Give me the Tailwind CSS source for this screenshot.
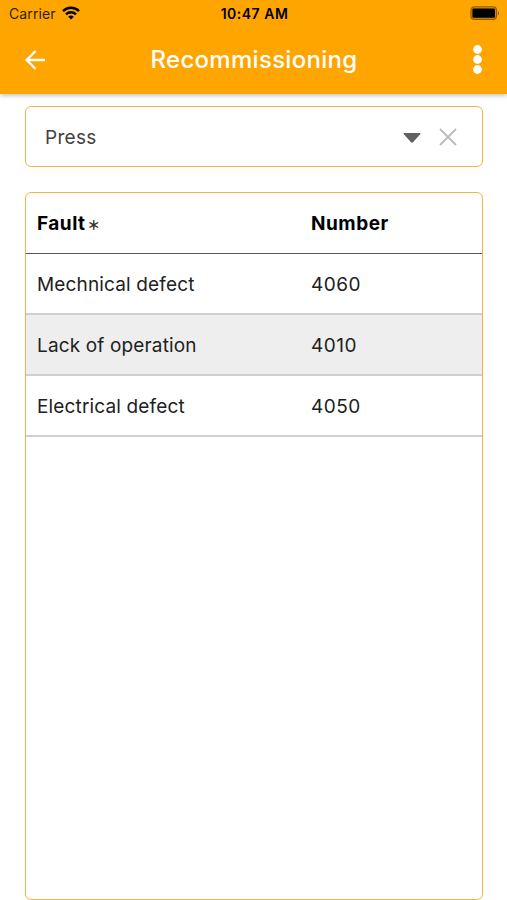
<!DOCTYPE html>
<html lang="en">
<head>
  <meta charset="UTF-8" />
  <meta name="viewport" content="width=device-width, initial-scale=1.0"/>
  <title>Recommissioning</title>
  <script src="https://cdn.jsdelivr.net/npm/@tailwindcss/browser@4"></script>
</head>

<body class="flex flex-col h-screen overflow-hidden bg-white font-['Inter',sans-serif] text-[#212121]">
  <header class="h-[94px] shrink-0 bg-[#ffa500] shadow-[0_1px_5px_rgba(0,0,0,0.3)]">
    <!-- Status bar -->
    <div class="grid grid-cols-3 items-center h-7 pl-[9px] pr-[7px] text-black">
      <div class="flex items-center gap-[6px]">
        <span class="text-[14px] leading-7 tracking-[0.1px] text-black/85">Carrier</span>
        <svg class="w-[18px] h-[14px] -mt-[2px]" viewBox="0 0 18 14" fill="none" stroke="currentColor" stroke-width="2.4">
          <path d="M1 5.1a11.3 11.3 0 0 1 16 0" />
          <path d="M4 8.3a7.1 7.1 0 0 1 10 0" />
          <path d="M9 13.6 6.2 10.8a4 4 0 0 1 5.6 0z" fill="currentColor" stroke="none" />
        </svg>
      </div>
      <span class="text-center text-[14px] font-semibold leading-7 tracking-[0.5px] whitespace-nowrap">10:47 AM</span>
      <svg class="justify-self-end w-[30px] h-[14px] -mt-[2px]" viewBox="0 0 30 14">
        <rect x="0.9" y="0.8" width="25.6" height="12.6" rx="3.4" fill="#000" fill-opacity="0.15" stroke="#000" stroke-opacity="0.4" stroke-width="1.1" />
        <rect x="2.4" y="2.4" width="22.6" height="9.4" rx="1.2" />
        <path d="M27.8 5v4.4c1.6-.7 1.6-3.7 0-4.4z" fill-opacity="0.45" />
      </svg>
    </div>
    <!-- Toolbar -->
    <div class="flex items-center justify-between h-[64px] pl-[25px] pr-[24px] text-white">
      <svg class="w-[21px] h-[20px]" viewBox="0 0 21 20" fill="none" stroke="currentColor" stroke-width="2.4">
        <path d="M20 10H2.5M10.6 1 1.7 10l8.9 9" />
      </svg>
      <h1 class="mr-[11px] text-[24px] font-medium tracking-[0.3px]">Recommissioning</h1>
      <svg class="w-[10px] h-[30px]" viewBox="0.5 0.5 10 30" fill="currentColor">
        <circle cx="5" cy="5" r="4.4" />
        <circle cx="5" cy="15" r="4.4" />
        <circle cx="5" cy="25" r="4.4" />
      </svg>
    </div>
  </header>

  <main class="flex flex-col grow gap-[25px] pt-3 pl-[25px] pr-[24px]">
    <div class="flex items-center h-[61px] shrink-0 pl-[19px] pr-[25px] border-[1.5px] border-[#f5b53d] rounded-[6px]">
      <span class="grow pt-[3px] text-[19px] tracking-[0.3px] text-[#424242]">Press</span>
      <svg class="w-[18px] h-[10px] mt-[3px] mr-[18px]" viewBox="0 0 18 10" fill="#616161">
        <path d="M1.2 0h15.6q1.2.2.4 1.3L10 9.2q-1 .9-2 0L.8 1.3Q0 .2 1.2 0z" />
      </svg>
      <svg class="w-[18px] h-[18px]" viewBox="0 0 18 18" fill="none" stroke="#bdbdbd" stroke-width="2">
        <path d="M1 1l16 16M17 1 1 17" />
      </svg>
    </div>

    <div class="h-[708px] shrink-0 overflow-hidden border-[1.5px] border-[#f5b53d] rounded-[6px]">
      <table class="w-full table-fixed text-left text-[19px]">
        <thead>
          <tr class="h-[60px] border-b border-[#555] text-black tracking-[0.5px]">
            <th class="w-[275px] pt-[2px] pl-[11px] font-bold">Fault<span class="ml-[1px] text-[16px] font-normal text-[#333]">∗</span></th>
            <th class="pt-[2px] pl-[10px] font-bold">Number</th>
          </tr>
        </thead>
        <tbody class="tracking-[0.15px]">
          <tr class="h-[61px] border-b-2 border-[#d0d0d0]">
            <td class="pt-[3px] pl-[11px]">Mechnical defect</td>
            <td class="pt-[3px] pl-[10px] tracking-[0.5px]">4060</td>
          </tr>
          <tr class="h-[61px] border-b-2 border-[#d0d0d0] bg-[#eeeeee]">
            <td class="pt-[3px] pl-[11px]">Lack of operation</td>
            <td class="pt-[3px] pl-[10px] tracking-[0.5px]">4010</td>
          </tr>
          <tr class="h-[61px] border-b-2 border-[#d0d0d0]">
            <td class="pt-[3px] pl-[11px]">Electrical defect</td>
            <td class="pt-[3px] pl-[10px] tracking-[0.5px]">4050</td>
          </tr>
        </tbody>
      </table>
    </div>
  </main>
</body>
</html>
